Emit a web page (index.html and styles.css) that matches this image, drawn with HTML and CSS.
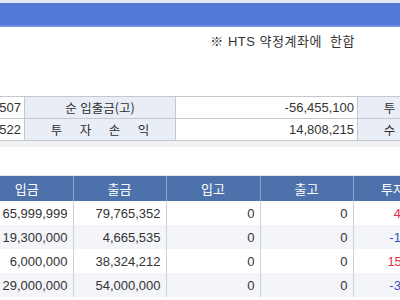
FILE: index.html
```html
<!DOCTYPE html>
<html lang="ko">
<head>
<meta charset="utf-8">
<link rel="stylesheet" href="styles.css">
</head>
<body>
<div class="page">
  <div class="topstrip"></div>
  <div class="titlebar"></div>
  <div class="note">※ HTS 약정계좌에&nbsp; 한합</div>
  <table class="summary">
    <colgroup><col class="s0"><col class="s1"><col class="s2"><col class="s3"></colgroup>
    <tr>
      <td class="num">12,345,507</td>
      <td class="label">순 입출금(고)</td>
      <td class="num">-56,455,100</td>
      <td class="label spaced">투 자 원 금</td>
    </tr>
    <tr>
      <td class="num">71,263,522</td>
      <td class="label spaced">투 자 손 익</td>
      <td class="num">14,808,215</td>
      <td class="label spaced">수 익 비 율</td>
    </tr>
  </table>
  <div class="band"></div>
  <div class="gap"></div>
  <table class="grid">
    <colgroup><col class="g1"><col class="g2"><col class="g3"><col class="g4"><col class="g5"></colgroup>
    <thead>
      <tr><th>입금</th><th>출금</th><th>입고</th><th>출고</th><th>투자손익</th></tr>
    </thead>
    <tbody>
      <tr><td>65,999,999</td><td>79,765,352</td><td>0</td><td>0</td><td class="pos">4,593,221</td></tr>
      <tr class="alt"><td>19,300,000</td><td>4,665,535</td><td>0</td><td>0</td><td class="neg">-1,204,380</td></tr>
      <tr><td>6,000,000</td><td>38,324,212</td><td>0</td><td>0</td><td class="pos">15,870,112</td></tr>
      <tr class="alt"><td>29,000,000</td><td>54,000,000</td><td>0</td><td>0</td><td class="neg">-3,450,738</td></tr>
    </tbody>
  </table>
</div>
</body>
</html>
```

FILE: styles.css
```css
html, body {
  margin: 0;
  padding: 0;
  background: #ffffff;
}
body {
  width: 400px;
  height: 300px;
  overflow: hidden;
  font-family: "Liberation Sans", "Noto Sans CJK KR", sans-serif;
  color: #333333;
}
.page {
  width: 400px;
}
.topstrip {
  height: 3px;
  background: #e2e6f5;
}
.titlebar {
  height: 22px;
  background: #5378d7;
  border-bottom: 2px solid #7391e2;
}
.note {
  box-sizing: border-box;
  height: 69px;
  padding: 7px 45px 0 0;
  text-align: right;
  font-size: 13px;
  letter-spacing: 0.5px;
  line-height: 15px;
  color: #333333;
  font-family: "Liberation Sans", "Noto Sans CJK KR", sans-serif;
}
table {
  border-collapse: collapse;
  table-layout: fixed;
}
.summary {
  margin-left: -56px;
  width: 564px;
}
.s0 { width: 80px; }
.s1 { width: 151px; }
.s2 { width: 182px; }
.s3 { width: 151px; }
.summary td {
  height: 21px;
  padding: 0 3px;
  border: 1px solid #c3c7cf;
  font-size: 13px;
  white-space: nowrap;
  overflow: hidden;
}
.summary td.num {
  text-align: right;
  background: #ffffff;
}
.summary td.label {
  text-align: center;
  background: #e9eef6;
  color: #2e2e2e;
  font-size: 12.5px;
  font-family: "Noto Sans CJK KR", sans-serif;
}
.summary td.spaced {
  word-spacing: 14px;
}
.band {
  height: 6px;
  background: #f1f1f3;
}
.gap {
  height: 28px;
  border-bottom: 1px solid #dfe3ea;
}
.grid {
  margin-left: -19px;
  width: 476px;
}
.g1 { width: 92px; }
.g2 { width: 93px; }
.g3 { width: 94px; }
.g4 { width: 93px; }
.g5 { width: 104px; }
.grid th {
  height: 25px;
  padding: 0;
  background: #4d72ab;
  color: #ffffff;
  font-weight: normal;
  font-size: 13px;
  font-family: "Noto Sans CJK KR", sans-serif;
  border-right: 1px solid #8ea5cb;
  text-align: center;
}
.grid td {
  height: 24px;
  padding: 0 5px 0 0;
  text-align: right;
  font-size: 13px;
  border-right: 1px solid #cdd1d9;
  background: #ffffff;
  white-space: nowrap;
  overflow: hidden;
}
.grid tr.alt td {
  background: #f3f5f9;
}
.grid td.pos {
  color: #e0324c;
}
.grid td.neg {
  color: #3552c4;
}
```
